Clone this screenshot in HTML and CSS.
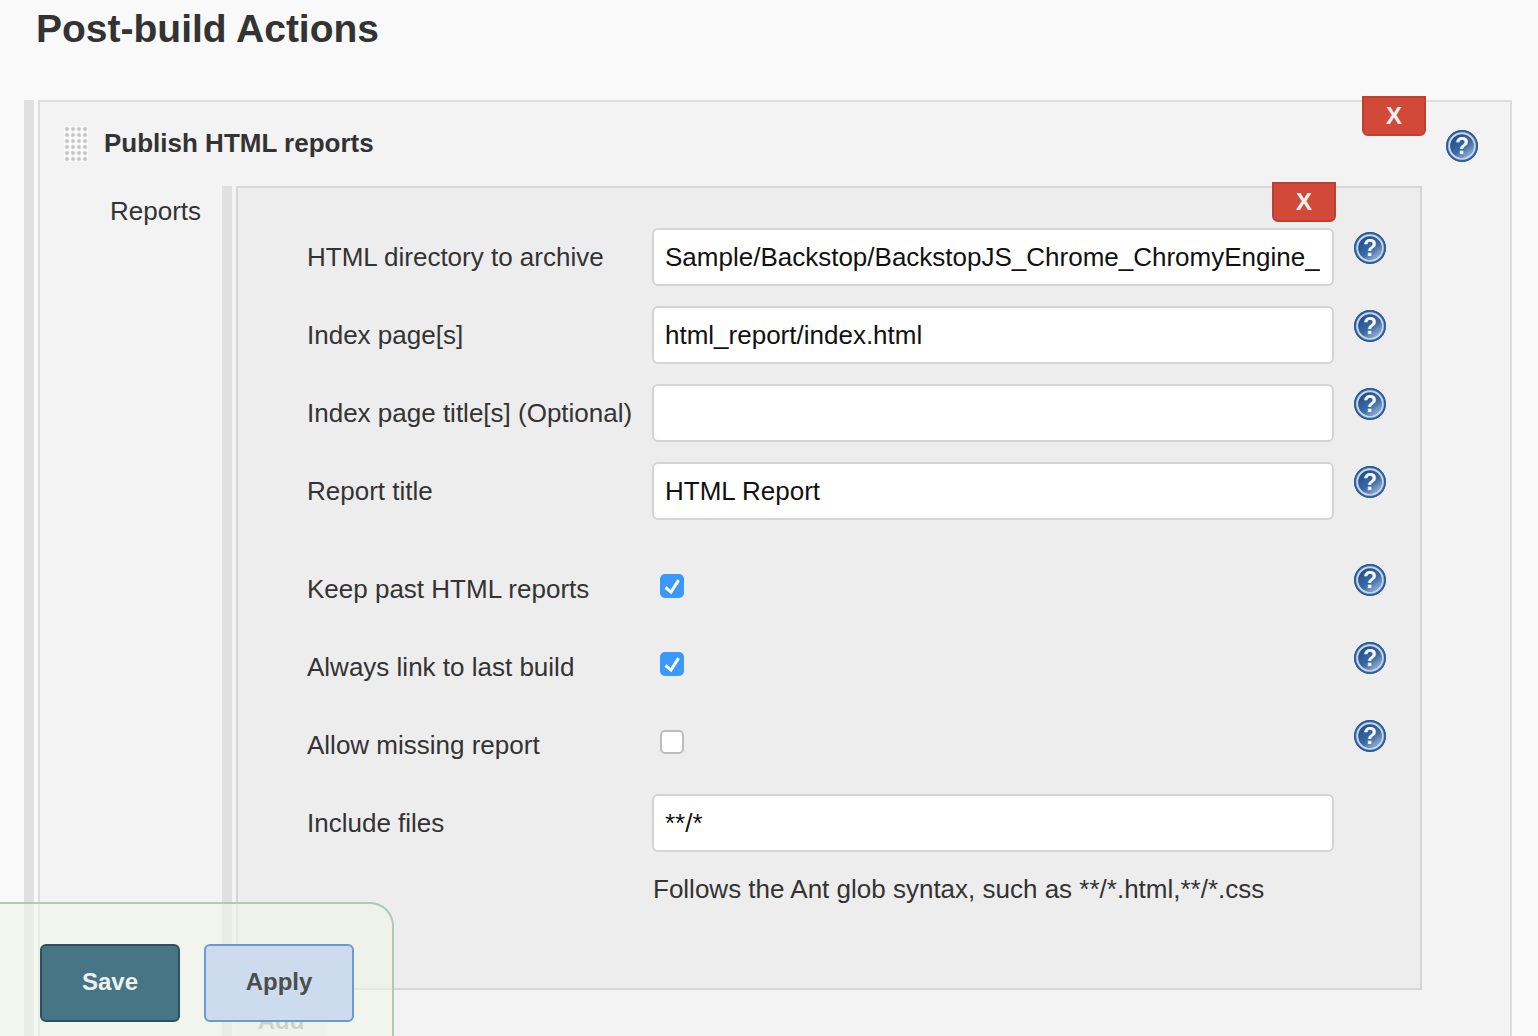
FILE: index.html
```html
<!DOCTYPE html>
<html>
<head>
<meta charset="utf-8">
<title>Post-build Actions</title>
<link rel="stylesheet" href="styles.css">
</head>
<body>

<svg class="defs" width="0" height="0">
  <defs>
    <linearGradient id="helpfill" x1="0.2" y1="0.1" x2="0.85" y2="0.95">
      <stop offset="0" stop-color="#264f8a"/>
      <stop offset="0.55" stop-color="#3d6aa3"/>
      <stop offset="1" stop-color="#9ab7d8"/>
    </linearGradient>
    <symbol id="help" viewBox="0 0 32 32">
      <circle cx="16" cy="16" r="16" fill="#4674ad"/>
      <circle cx="16" cy="16" r="15.2" fill="none" stroke="#2c5a98" stroke-width="1.4"/>
      <circle cx="16" cy="16" r="12.8" fill="none" stroke="#c6d7ea" stroke-width="2"/>
      <circle cx="16" cy="16" r="11.6" fill="url(#helpfill)"/>
      <text x="16" y="24" text-anchor="middle" class="help-mark">?</text>
    </symbol>
  </defs>
</svg>

<h1 class="title">Post-build Actions</h1>

<div class="section">
  <div class="bar"></div>
  <div class="box">
    <button class="del del-outer" type="button">X</button>
    <svg class="help help-outer"><use href="#help"/></svg>

    <div class="box-head">
      <span class="handle"></span>
      <b>Publish HTML reports</b>
    </div>

    <div class="reports">
      <div class="reports-label">Reports</div>
      <div class="bar"></div>
      <div class="reports-col">
        <div class="inner">
          <button class="del del-inner" type="button">X</button>

          <div class="row">
            <label class="lbl">HTML directory to archive</label>
            <input class="txt" type="text" value="Sample/Backstop/BackstopJS_Chrome_ChromyEngine_Scenario">
            <svg class="help"><use href="#help"/></svg>
          </div>
          <div class="row">
            <label class="lbl">Index page[s]</label>
            <input class="txt" type="text" value="html_report/index.html">
            <svg class="help"><use href="#help"/></svg>
          </div>
          <div class="row">
            <label class="lbl">Index page title[s] (Optional)</label>
            <input class="txt" type="text" value="">
            <svg class="help"><use href="#help"/></svg>
          </div>
          <div class="row row-last-text">
            <label class="lbl">Report title</label>
            <input class="txt" type="text" value="HTML Report">
            <svg class="help"><use href="#help"/></svg>
          </div>

          <div class="row">
            <label class="lbl">Keep past HTML reports</label>
            <span class="chk on"><svg viewBox="0 0 24 24"><path d="M5.5 13.5l5.5 4.6 7.6-12" /></svg></span>
            <svg class="help"><use href="#help"/></svg>
          </div>
          <div class="row">
            <label class="lbl">Always link to last build</label>
            <span class="chk on"><svg viewBox="0 0 24 24"><path d="M5.5 13.5l5.5 4.6 7.6-12" /></svg></span>
            <svg class="help"><use href="#help"/></svg>
          </div>
          <div class="row">
            <label class="lbl">Allow missing report</label>
            <span class="chk"></span>
            <svg class="help"><use href="#help"/></svg>
          </div>
          <div class="row">
            <label class="lbl">Include files</label>
            <input class="txt" type="text" value="**/*">
          </div>
          <div class="hint">Follows the Ant glob syntax, such as **/*.html,**/*.css</div>
        </div>
        <button class="add" type="button">Add</button>
      </div>
    </div>
  </div>
</div>

<div class="savebar">
  <button class="btn btn-save" type="button">Save</button>
  <button class="btn btn-apply" type="button">Apply</button>
</div>

</body>
</html>
```

FILE: styles.css
```css
html, body { margin: 0; height: 1036px; overflow: hidden; }
body {
  background: #f9f9f9;
  color: #333;
  font-family: "Liberation Sans", Arial, sans-serif;
  font-size: 26px;
  position: relative;
}

.defs { position: absolute; }
.help-mark { font: bold 23px "Liberation Sans", Arial, sans-serif; fill: #f4f7fb; }

.title {
  margin: 0 0 0 36px;
  height: 100px;
  padding-top: 7px;
  box-sizing: border-box;
  font-size: 39px;
  line-height: 44px;
  font-weight: bold;
}

.section { display: flex; height: 936px; margin: 0 26px 0 24px; gap: 4px; }
.bar { width: 10px; flex: none; background: #e0e0e0; }

.box {
  flex: 1;
  position: relative;
  box-sizing: border-box;
  border: 2px solid #ddd;
  border-bottom: 0;
  background: #f3f3f3;
}

.del {
  position: absolute;
  width: 64px;
  height: 40px;
  padding: 0;
  background: #d24939;
  border: 2px solid #bd3f30;
  border-radius: 0 0 6px 6px;
  color: #f3f3f3;
  font: bold 24px "Liberation Sans", Arial, sans-serif;
}
.del-outer { top: -6px; right: 84px; }
.del-inner { top: -6px; right: 84px; }

.help { width: 32px; height: 32px; flex: none; }
.help-outer { position: absolute; top: 28px; right: 32px; }

.box-head {
  display: flex;
  align-items: center;
  gap: 16px;
  height: 84px;
  padding: 0 0 2px 24px;
  box-sizing: border-box;
  font-size: 26px;
}
.handle {
  width: 24px;
  height: 36px;
  margin-top: 2px;
  background-color: #fbfbfb;
  background-image: radial-gradient(circle at center, #bcbcbc 0, #c8c8c8 1.2px, transparent 2.8px);
  background-size: 6px 6px;
}

.reports { display: flex; }
.reports-label { width: 182px; padding: 10px 0 0 70px; box-sizing: border-box; line-height: 30px; }
.reports .bar { margin-right: 4px; }
.reports-col { width: 1186px; }

.inner {
  position: relative;
  height: 804px;
  box-sizing: border-box;
  border: 2px solid #d6d6d6;
  background: #ededed;
  padding: 40px 0 0 69px;
}

.row {
  display: flex;
  align-items: flex-start;
  height: 58px;
  margin-bottom: 20px;
}
.row-last-text { margin-bottom: 40px; }

.lbl { width: 345px; flex: none; line-height: 58px; }

.txt {
  width: 682px;
  height: 58px;
  flex: none;
  box-sizing: border-box;
  padding: 0 12px 0 11px;
  border: 2px solid #d4d4d4;
  border-radius: 6px;
  background: #fff;
  color: #111;
  font: 26px "Liberation Sans", Arial, sans-serif;
}

.row .help { margin: 4px 0 0 20px; }

.chk {
  width: 24px;
  height: 24px;
  flex: none;
  box-sizing: border-box;
  margin: 14px 650px 0 8px;
  background: #fff;
  border: 2px solid #bdbdbd;
  border-radius: 5px;
}
.chk.on { background: #3b99fc; border: 0; }
.chk svg { display: block; width: 24px; height: 24px; fill: none; stroke: #fff; stroke-width: 3; }

.hint { margin: 22px 0 0 346px; line-height: 30px; }

.add {
  display: block;
  width: 90px;
  height: 30px;
  margin-top: 16px;
  padding: 0;
  background: #f0f0f0;
  border: 0;
  color: #999;
  font: bold 24px "Liberation Sans", Arial, sans-serif;
}

.savebar {
  position: absolute;
  left: 0;
  bottom: 0;
  width: 394px;
  height: 134px;
  box-sizing: border-box;
  display: flex;
  gap: 24px;
  padding: 40px 0 0 40px;
  background: rgba(241, 246, 234, 0.62);
  border-top: 2px solid #a9cdb9;
  border-right: 2px solid #a9cdb9;
  border-top-right-radius: 24px;
}
.btn {
  height: 78px;
  padding: 0 0 2px;
  border-radius: 6px;
  font: bold 24px "Liberation Sans", Arial, sans-serif;
}
.btn-save { width: 140px; background: #467585; border: 2px solid #30505f; color: #eef2f3; }
.btn-apply { width: 150px; background: #ccdcee; border: 2px solid #6a9bd0; color: #4d4d4d; }
```
